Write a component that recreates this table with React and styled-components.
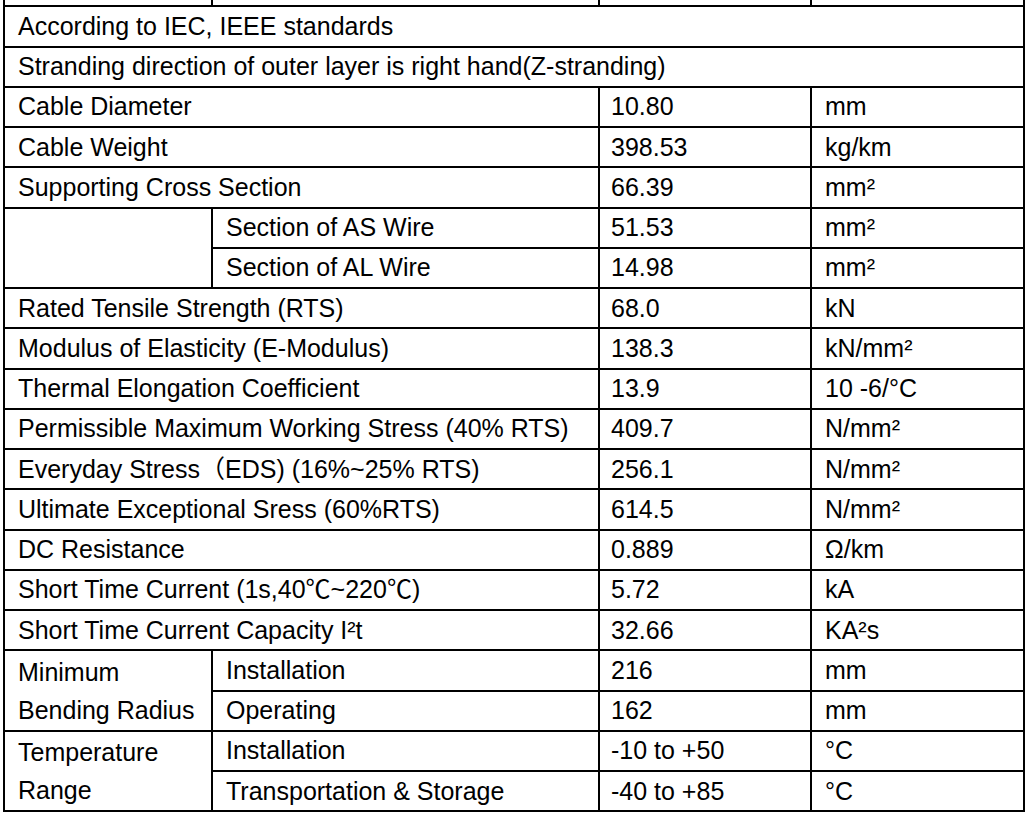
import styled, { createGlobalStyle } from "styled-components";

const GlobalStyle = createGlobalStyle`
  html, body {
    margin: 0;
    padding: 0;
    background: #ffffff;
  }
  body {
    font-family: "Liberation Sans", Arial, "Noto Sans CJK SC", sans-serif;
    color: #000000;
  }
`;

const Sheet = styled.table`
  border-collapse: collapse;
  table-layout: fixed;
  width: 1020px;
  margin: -35px 0 0 3px;
  font-size: 25px;
  line-height: 1;
`;

const Col = styled.col`
  width: ${(props) => props.$w}px;
`;

const Row = styled.tr`
  height: 40.25px;
`;

const Cell = styled.td`
  border: 2px solid #000;
  padding: 0 0 0 ${(props) => (props.$tight ? 11 : 13)}px;
  vertical-align: middle;
  white-space: nowrap;
  line-height: ${(props) => (props.$stack ? "38px" : 1)};
`;

const specs = [
  ["Cable Diameter", "10.80", "mm"],
  ["Cable Weight", "398.53", "kg/km"],
];

const mechanical = [
  ["Rated Tensile Strength (RTS)", "68.0", "kN"],
  ["Modulus of Elasticity (E-Modulus)", "138.3", "kN/mm²"],
  ["Thermal Elongation Coefficient", "13.9", "10 -6/°C"],
  ["Permissible Maximum Working Stress (40% RTS)", "409.7", "N/mm²"],
  ["Everyday Stress（EDS) (16%~25% RTS)", "256.1", "N/mm²"],
  ["Ultimate Exceptional Sress (60%RTS)", "614.5", "N/mm²"],
  ["DC Resistance", "0.889", "Ω/km"],
  ["Short Time Current (1s,40℃~220℃)", "5.72", "kA"],
  ["Short Time Current Capacity I²t", "32.66", "KA²s"],
];

function SpecRow({ label, value, unit }) {
  return (
    <Row>
      <Cell colSpan={2}>{label}</Cell>
      <Cell $tight>{value}</Cell>
      <Cell>{unit}</Cell>
    </Row>
  );
}

function SplitRows({ title, items }) {
  return (
    <>
      {items.map(([sub, value, unit], i) => (
        <Row key={sub + i}>
          {i === 0 && (
            <Cell rowSpan={items.length} $stack>
              {title.map((line, j) => (
                <div key={j}>{line}</div>
              ))}
            </Cell>
          )}
          <Cell>{sub}</Cell>
          <Cell $tight>{value}</Cell>
          <Cell>{unit}</Cell>
        </Row>
      ))}
    </>
  );
}

export default function App() {
  return (
    <>
      <GlobalStyle />
      <Sheet>
        <colgroup>
          <Col $w={208} />
          <Col $w={387} />
          <Col $w={212} />
          <Col $w={213} />
        </colgroup>
        <tbody>
          <Row>
            <Cell />
            <Cell />
            <Cell />
            <Cell />
          </Row>
          <Row>
            <Cell colSpan={4}>According to IEC, IEEE standards</Cell>
          </Row>
          <Row>
            <Cell colSpan={4}>
              Stranding direction of outer layer is right hand(Z-stranding)
            </Cell>
          </Row>
          {specs.map(([l, v, u]) => (
            <SpecRow key={l} label={l} value={v} unit={u} />
          ))}
          <SpecRow label="Supporting Cross Section" value="66.39" unit="mm²" />
          <SplitRows
            title={[""]}
            items={[
              ["Section of AS Wire", "51.53", "mm²"],
              ["Section of AL Wire", "14.98", "mm²"],
            ]}
          />
          {mechanical.map(([l, v, u]) => (
            <SpecRow key={l} label={l} value={v} unit={u} />
          ))}
          <SplitRows
            title={["Minimum", "Bending Radius"]}
            items={[
              ["Installation", "216", "mm"],
              ["Operating", "162", "mm"],
            ]}
          />
          <SplitRows
            title={["Temperature", "Range"]}
            items={[
              ["Installation", "-10 to +50", "°C"],
              ["Transportation & Storage", "-40 to +85", "°C"],
            ]}
          />
        </tbody>
      </Sheet>
    </>
  );
}
